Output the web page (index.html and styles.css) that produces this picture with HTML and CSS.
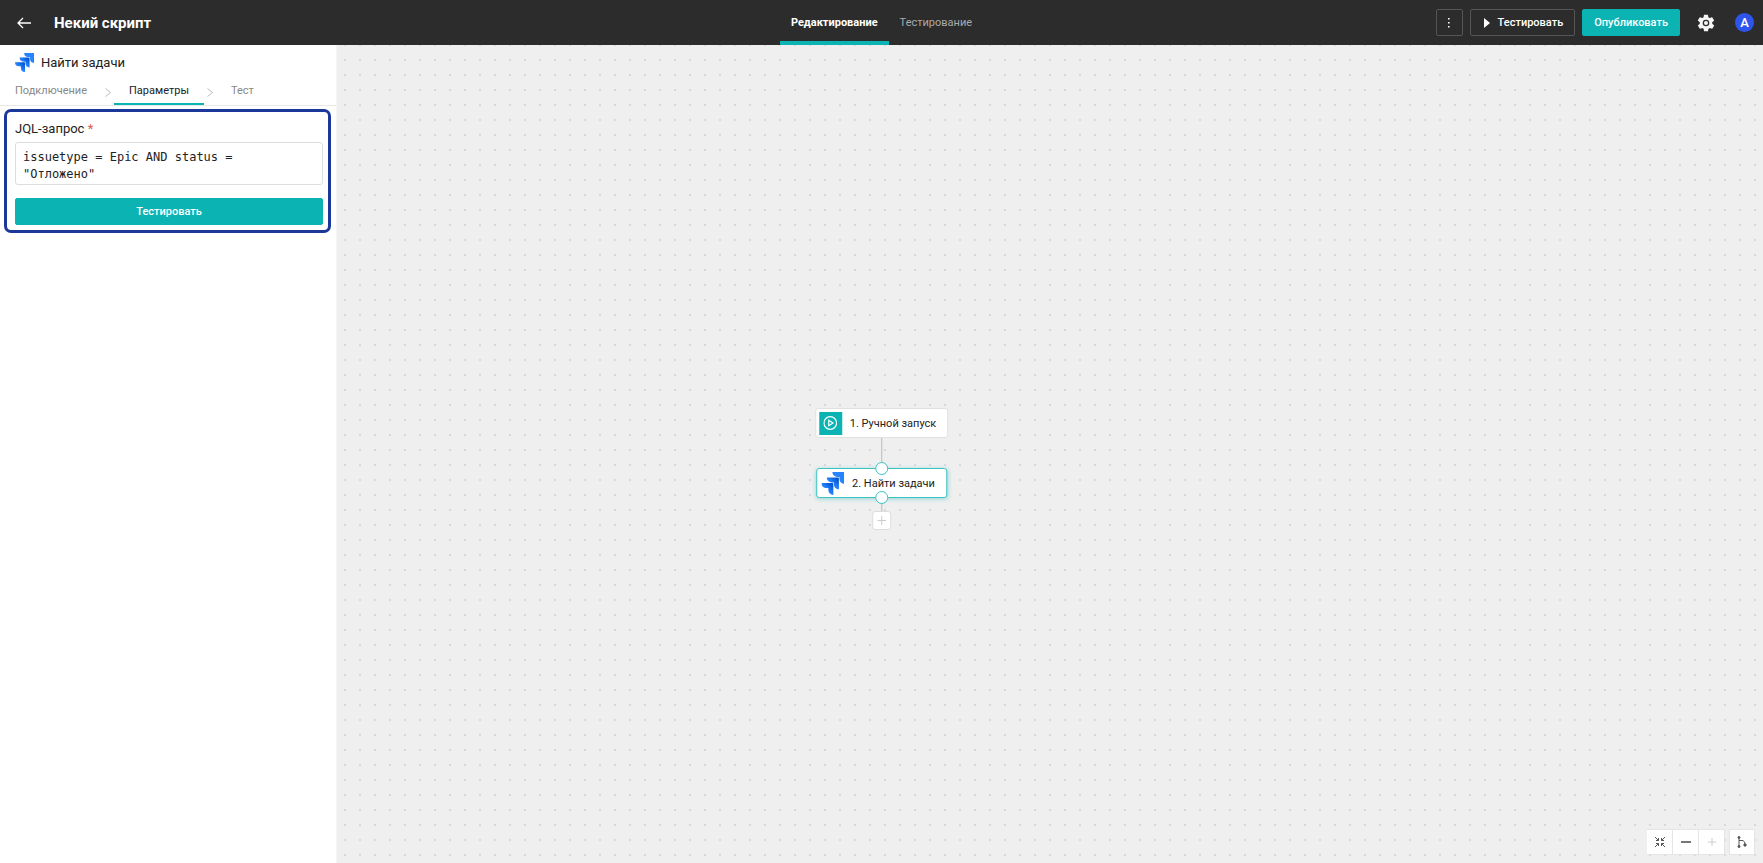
FILE: index.html
```html
<!DOCTYPE html>
<html lang="ru">
<head>
    <meta charset="UTF-8">
    <meta name="viewport" content="width=device-width, initial-scale=1.0">
    <title>Некий скрипт</title>
    <link rel="stylesheet" href="styles.css">
</head>
<body>
    <svg class="sprite" aria-hidden="true">
        <defs>
            <linearGradient id="jira-grad" x1="1" y1="0" x2="0.4" y2="0.6">
                <stop offset="0.15" stop-color="#0052cc"/>
                <stop offset="0.9" stop-color="#2684ff"/>
            </linearGradient>
        </defs>
        <symbol id="jira" viewBox="0 0 24 24">
            <path fill="#2684ff" d="M23.4 0H11.6a5.2 5.2 0 0 0 5.2 5.2H19v2.1a5.2 5.2 0 0 0 5.2 5.2V.8a.8.8 0 0 0-.8-.8z"/>
            <path fill="url(#jira-grad)" d="M17.6 5.8H5.8A5.2 5.2 0 0 0 11 11h2.2v2.1a5.2 5.2 0 0 0 5.2 5.2V6.6a.8.8 0 0 0-.8-.8z"/>
            <path fill="url(#jira-grad)" d="M11.8 11.6H0a5.2 5.2 0 0 0 5.2 5.2h2.2v2.1a5.2 5.2 0 0 0 5.2 5.1V12.4a.8.8 0 0 0-.8-.8z"/>
        </symbol>
    </svg>

    <header class="topbar">
        <div class="topbar-left">
            <button class="icon-btn" type="button" aria-label="Назад">
                <svg width="14" height="12" viewBox="0 0 14 12" fill="none" stroke="#fff" stroke-width="1.3"><path d="M6 1L1 6l5 5M1 6h13"/></svg>
            </button>
            <h1 class="title">Некий скрипт</h1>
        </div>
        <nav class="tabs">
            <a class="tab active" href="#edit">Редактирование</a>
            <a class="tab" href="#test">Тестирование</a>
        </nav>
        <div class="topbar-right">
            <button class="btn btn-outline btn-more" type="button" aria-label="Ещё">
                <svg width="2" height="10" viewBox="0 0 2 10" fill="#fff"><path d="M0 0h1.600v1.600H0zM0 4h1.600v1.600H0zM0 8h1.600v1.600H0z"/></svg>
            </button>
            <button class="btn btn-outline" type="button">
                <svg width="8" height="10" viewBox="0 0 8 10" fill="#fff"><path d="M2 0l6 5-6 5z"/></svg>
                Тестировать
            </button>
            <button class="btn btn-primary" type="button">Опубликовать</button>
            <button class="icon-btn settings" type="button" aria-label="Настройки">
                <svg width="20" height="20" viewBox="0 0 24 24" fill="#f5f5f5"><path d="M19.4 13c0-.3.1-.6.1-1s0-.7-.1-1l2.1-1.6c.2-.2.2-.4.1-.6l-2-3.5c-.1-.2-.4-.3-.6-.2l-2.5 1c-.5-.4-1.1-.7-1.7-1l-.4-2.600c0-.3-.2-.5-.4-.5h-4c-.3 0-.5.2-.5.4l-.4 2.700c-.6.3-1.1.6-1.700 1l-2.500-1c-.2-.1-.5 0-.6.2l-2 3.500c-.1.2-.1.4.1.6L4.600 11c0 .3-.1.7-.1 1s0 .7.1 1l-2.100 1.600c-.2.2-.2.4-.1.6l2 3.500c.1.2.4.3.6.2l2.500-1c.5.4 1.100.7 1.700 1l.4 2.600c0 .3.2.5.5.5h4c.2 0 .4-.2.4-.5l.4-2.600c.6-.3 1.200-.6 1.700-1l2.500 1c.2.1.5 0 .6-.2l2-3.500c.1-.2.1-.4-.1-.6z"/><circle cx="12" cy="12" r="3.200" fill="none" stroke="#2c2c2c" stroke-width="1.600"/></svg>
            </button>
            <span class="avatar">A</span>
        </div>
    </header>

    <main class="workspace">
        <section class="canvas">
            <div class="flow">
                <div class="node">
                    <span class="node-icon">
                        <svg width="14" height="14" viewBox="0 0 14 14" fill="none" stroke="#fff" stroke-width="1.2"><circle cx="7" cy="7" r="6.3"/><path d="M5.5 4.300v5.400L9.700 7z"/></svg>
                    </span>
                    1. Ручной запуск
                </div>
                <div class="line"></div>
                <div class="node selected">
                    <svg class="node-logo" width="23" height="23"><use href="#jira"/></svg>
                    2. Найти задачи
                    <span class="port port-in"></span>
                    <span class="port port-out"></span>
                </div>
                <div class="line line-short"></div>
                <button class="add-btn" type="button" aria-label="Добавить">
                    <svg width="9" height="9" viewBox="0 0 9 9" stroke="#ccc"><path d="M4.500 0v9M0 4.500h9"/></svg>
                </button>
            </div>

            <div class="controls">
                <div class="control-group">
                    <button class="control" type="button" aria-label="По размеру экрана">
                        <svg width="10" height="10" viewBox="0 0 10 10" fill="none" stroke="#555"><path d="M0 0l3.500 3.500M1 3.500h2.500V1M10 0L6.500 3.500M9 3.500H6.500V1M0 10l3.500-3.500M1 6.500h2.500V9M10 10L6.500 6.500M9 6.500H6.500V9"/></svg>
                    </button>
                    <button class="control" type="button" aria-label="Уменьшить">
                        <svg width="10" height="10" viewBox="0 0 10 10" stroke="#777" stroke-width="2"><path d="M0 5h10"/></svg>
                    </button>
                    <button class="control" type="button" aria-label="Увеличить" disabled>
                        <svg width="10" height="10" viewBox="0 0 10 10" stroke="#ccc"><path d="M5 1v8M1 5h8"/></svg>
                    </button>
                </div>
                <button class="control single" type="button" aria-label="Структура">
                    <svg width="10" height="12" viewBox="0 0 10 12" fill="none" stroke="#555"><path d="M2 1v10M2 4.500h3C7 4.500 8 6 8 9"/><circle cx="2" cy="1.500" r="1" fill="#555"/><circle cx="2" cy="10.500" r="1" fill="#555"/><circle cx="8" cy="9" r="1.200" fill="#555"/></svg>
                </button>
            </div>
        </section>

        <aside class="panel">
            <h2 class="panel-title">
                <svg width="19" height="19"><use href="#jira"/></svg>
                Найти задачи
            </h2>
            <nav class="steps">
                <a class="step" href="#connection">Подключение</a>
                <svg class="chevron" width="6" height="9" viewBox="0 0 6 9" fill="none" stroke="#bbb"><path d="M.5.5l5 4-5 4"/></svg>
                <a class="step active" href="#params">Параметры</a>
                <svg class="chevron" width="6" height="9" viewBox="0 0 6 9" fill="none" stroke="#bbb"><path d="M.5.5l5 4-5 4"/></svg>
                <a class="step" href="#check">Тест</a>
            </nav>
            <form class="params">
                <label class="label" for="jql">JQL-запрос <span class="required">*</span></label>
                <textarea class="query" id="jql" rows="2" spellcheck="false">issuetype = Epic AND status = "Отложено"</textarea>
                <button class="btn btn-primary btn-submit" type="button">Тестировать</button>
            </form>
        </aside>
    </main>
</body>
</html>
```
FILE: styles.css
```css
* {
    box-sizing: border-box;
}
body {
    margin: 0;
    min-height: 100vh;
    display: flex;
    flex-direction: column;
    font-family: Roboto, sans-serif;
    font-size: 11px;
    color: #222;
}
button {
    font: inherit;
    cursor: pointer;
}
svg {
    display: block;
    flex: none;
}
.sprite {
    position: absolute;
    width: 0;
    height: 0;
}

/* header */
.topbar {
    height: 45px;
    display: grid;
    grid-template-columns: 1fr auto 1fr;
    background: #2c2c2c;
    color: #fff;
}
.topbar-left, .topbar-right {
    display: flex;
    align-items: center;
}
.topbar-left {
    padding-left: 17px;
    gap: 23px;
}
.topbar-right {
    justify-content: flex-end;
    gap: 7px;
    padding-right: 9px;
}
.icon-btn {
    padding: 0;
    border: none;
    background: none;
}
.title {
    margin: 0;
    font-size: 15px;
    font-weight: 700;
}
.tabs {
    display: flex;
}
.tab {
    display: flex;
    align-items: center;
    padding: 0 11px;
    border-top: 4px solid transparent;
    border-bottom: 4px solid transparent;
    color: #aaa;
    text-decoration: none;
}
.tab.active {
    border-bottom-color: #0bb3b3;
    color: #fff;
    font-weight: 700;
}
.btn {
    display: flex;
    align-items: center;
    justify-content: center;
    gap: 8px;
    height: 27px;
    padding: 0 11px;
    border: 1px solid #0bb3b3;
    border-radius: 2px;
    color: #fff;
    font-weight: 500;
}
.btn-primary {
    background: #0bb3b3;
}
.btn-outline {
    border-color: #555;
    background: transparent;
}
.btn-more {
    width: 27px;
    padding: 0;
}
.settings {
    margin: 0 12px 0 9px;
}
.avatar {
    width: 19px;
    height: 19px;
    border-radius: 50%;
    background: #2f54eb;
    font-size: 13px;
    font-weight: 500;
    line-height: 19px;
    text-align: center;
}

/* canvas lies under the side panel */
.workspace {
    flex: 1;
    display: grid;
}
.canvas, .panel {
    grid-area: 1 / 1;
}
.canvas {
    position: relative;
    background-color: #efefef;
    background-image: conic-gradient(from 90deg at 13px 13px, #d9d9d9 90deg, transparent 0);
    background-position: 1px 1px;
    background-size: 15px 15px;
}
.flow {
    position: absolute;
    top: 363px;
    left: 50%;
    transform: translateX(-50%);
    display: flex;
    flex-direction: column;
    align-items: center;
}
.node {
    position: relative;
    display: flex;
    align-items: center;
    gap: 8px;
    height: 30px;
    padding: 0 11px 0 3px;
    border: 1px solid #e0e0e0;
    border-radius: 3px;
    background: #fff;
    white-space: nowrap;
}
.node.selected {
    border-color: #3dc2c2;
    padding-left: 4px;
    box-shadow: 0 1px 4px rgba(11, 179, 179, 0.4);
}
.node-icon {
    display: grid;
    place-items: center;
    width: 23px;
    height: 23px;
    background: #0bb3b3;
}
.port {
    position: absolute;
    left: 50%;
    width: 13px;
    height: 13px;
    margin-left: -6px;
    border: 1px solid #3dc2c2;
    border-radius: 50%;
    background: #fff;
}
.port-in {
    top: -7px;
}
.port-out {
    bottom: -7px;
}
.line {
    width: 1px;
    height: 30px;
    background: #bbb;
}
.line-short {
    height: 13px;
}
.add-btn {
    display: grid;
    place-items: center;
    width: 19px;
    height: 19px;
    padding: 0;
    border: 1px solid #ddd;
    border-radius: 3px;
    background: #fff;
}
.controls {
    position: absolute;
    right: 8px;
    bottom: 8px;
    display: flex;
    gap: 4px;
}
.control-group {
    display: flex;
}
.control {
    display: grid;
    place-items: center;
    width: 26px;
    height: 26px;
    padding: 0;
    border: 1px solid #e5e5e5;
    border-left-width: 0;
    background: #fff;
}
.single {
    border-left-width: 1px;
}

/* side panel */
.panel {
    z-index: 1;
    justify-self: start;
    width: 337px;
    background: #fff;
    border-right: 1px solid #f5f5f5;
}
.panel-title {
    display: flex;
    align-items: center;
    gap: 7px;
    height: 34px;
    margin: 0;
    padding-left: 15px;
    font-size: 13px;
    font-weight: 400;
}
.steps {
    display: flex;
    align-items: center;
    height: 27px;
    border-bottom: 1px solid #e8e8e8;
}
.step {
    height: 26px;
    padding: 0 15px;
    border-bottom: 2px solid transparent;
    color: #888;
    line-height: 24px;
    text-decoration: none;
}
.step.active {
    border-bottom-color: #0bb3b3;
    color: #222;
}
.chevron {
    margin: 0 3px;
}
.params {
    margin: 3px 5px 0 4px;
    padding: 8px 5px 5px 8px;
    border: 3px solid #1b3799;
    border-radius: 7px;
}
.label {
    display: block;
    margin-bottom: 5px;
    font-size: 13px;
    line-height: 17px;
}
.required {
    color: #e05a4e;
}
.query {
    display: block;
    width: 100%;
    height: 43px;
    margin-bottom: 13px;
    padding: 6px 24px 0 7px;
    border: 1px solid #ddd;
    border-radius: 3px;
    outline: none;
    resize: none;
    overflow: hidden;
    color: #222;
    font-family: "DejaVu Sans Mono", monospace;
    font-size: 12px;
    line-height: 17px;
}
.btn-submit {
    width: 100%;
}
```
